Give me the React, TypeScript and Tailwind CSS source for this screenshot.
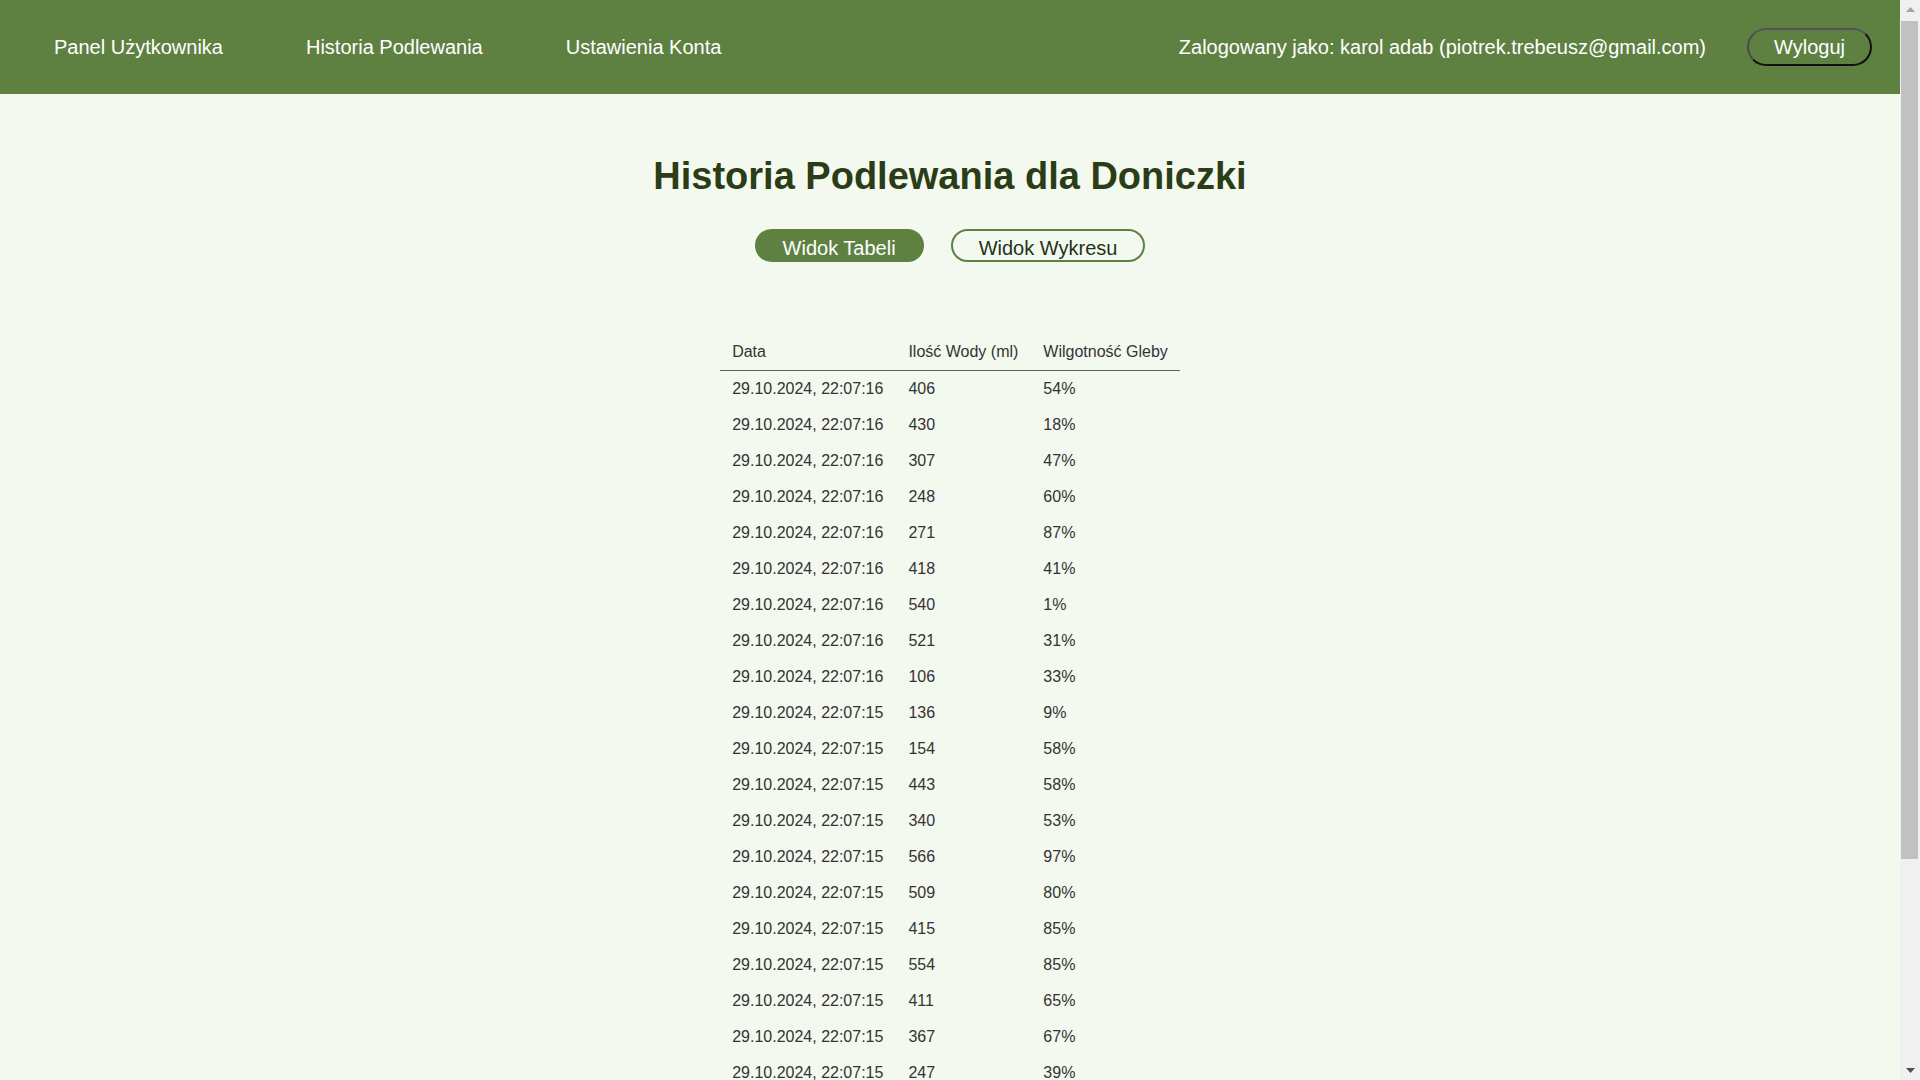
import React from "react";

const rows: [string, string, string][] = [
  ["29.10.2024, 22:07:16", "406", "54%"],
  ["29.10.2024, 22:07:16", "430", "18%"],
  ["29.10.2024, 22:07:16", "307", "47%"],
  ["29.10.2024, 22:07:16", "248", "60%"],
  ["29.10.2024, 22:07:16", "271", "87%"],
  ["29.10.2024, 22:07:16", "418", "41%"],
  ["29.10.2024, 22:07:16", "540", "1%"],
  ["29.10.2024, 22:07:16", "521", "31%"],
  ["29.10.2024, 22:07:16", "106", "33%"],
  ["29.10.2024, 22:07:15", "136", "9%"],
  ["29.10.2024, 22:07:15", "154", "58%"],
  ["29.10.2024, 22:07:15", "443", "58%"],
  ["29.10.2024, 22:07:15", "340", "53%"],
  ["29.10.2024, 22:07:15", "566", "97%"],
  ["29.10.2024, 22:07:15", "509", "80%"],
  ["29.10.2024, 22:07:15", "415", "85%"],
  ["29.10.2024, 22:07:15", "554", "85%"],
  ["29.10.2024, 22:07:15", "411", "65%"],
  ["29.10.2024, 22:07:15", "367", "67%"],
  ["29.10.2024, 22:07:15", "247", "39%"],
  ["29.10.2024, 22:07:15", "312", "44%"],
  ["29.10.2024, 22:07:15", "205", "72%"],
];

export default function App() {
  return (
    <div
      className="flex h-screen w-full overflow-hidden bg-[#f3f9ee]"
      style={{ fontFamily: '"Liberation Sans", Arial, sans-serif' }}
    >
      <div className="flex-1 min-w-0 overflow-hidden flex flex-col">
        <header className="flex items-center justify-between h-[94px] shrink-0 bg-[#5e8142] pl-[54px] pr-[28px] text-white text-[20px]">
          <nav className="flex items-center gap-[83px]">
            <a className="leading-[23px]">Panel Użytkownika</a>
            <a className="leading-[23px]">Historia Podlewania</a>
            <a className="leading-[23px]">Ustawienia Konta</a>
          </nav>
          <div className="flex items-center gap-[41px]">
            <span className="leading-[23px]">
              Zalogowany jako: karol adab (piotrek.trebeusz@gmail.com)
            </span>
            <button className="h-[38px] px-[25px] rounded-full border-2 border-t-[#555] border-l-[#4a4a4a] border-r-[#111] border-b-[#111] text-white text-[20px] leading-[23px] bg-transparent">
              Wyloguj
            </button>
          </div>
        </header>
        <main className="flex flex-col items-center pt-[60px]">
          <h1 className="text-[38px] leading-[44px] font-bold text-[#2b3d17]">
            Historia Podlewania dla Doniczki
          </h1>
          <div className="flex gap-[27px] mt-[31px]">
            <button className="h-[33px] px-[26px] pt-[6px] rounded-full border-2 border-[#5e8142] bg-[#5e8142] text-white text-[20px] leading-[23px] flex items-start">
              Widok Tabeli
            </button>
            <button className="h-[33px] px-[26px] pt-[6px] rounded-full border-2 border-[#5e8142] bg-transparent text-[#22331a] text-[20px] leading-[23px] flex items-start">
              Widok Wykresu
            </button>
          </div>
          <table className="mt-[72px] border-collapse text-[16px] text-[#333]">
            <thead>
              <tr className="border-b border-[#5f5f5f]">
                <th className="font-normal text-left px-[12.5px] py-2 leading-5">Data</th>
                <th className="font-normal text-left px-[12.5px] py-2 leading-5">Ilość Wody (ml)</th>
                <th className="font-normal text-left px-[12.5px] py-2 leading-5">Wilgotność Gleby</th>
              </tr>
            </thead>
            <tbody>
              {rows.map((r, i) => (
                <tr key={i}>
                  <td className="px-[12.5px] py-2 leading-5">{r[0]}</td>
                  <td className="px-[12.5px] py-2 leading-5">{r[1]}</td>
                  <td className="px-[12.5px] py-2 leading-5">{r[2]}</td>
                </tr>
              ))}
            </tbody>
          </table>
        </main>
      </div>
      <div className="w-[20px] shrink-0 h-full bg-[#f0f0f0] flex flex-col items-center">
        <div className="h-[18px] w-full flex items-center justify-center">
          <svg width="9" height="5" viewBox="0 0 9 5">
            <path d="M0 5 L4.5 0 L9 5 Z" fill="#a3a3a3" />
          </svg>
        </div>
        <div className="w-[17px] ml-[-1px] mt-[3px] h-[838px] bg-[#c1c1c1]" />
        <div className="flex-1" />
        <div className="h-[20px] w-full flex items-center justify-center">
          <svg width="9" height="5" viewBox="0 0 9 5">
            <path d="M0 0 L9 0 L4.5 5 Z" fill="#505050" />
          </svg>
        </div>
      </div>
    </div>
  );
}
